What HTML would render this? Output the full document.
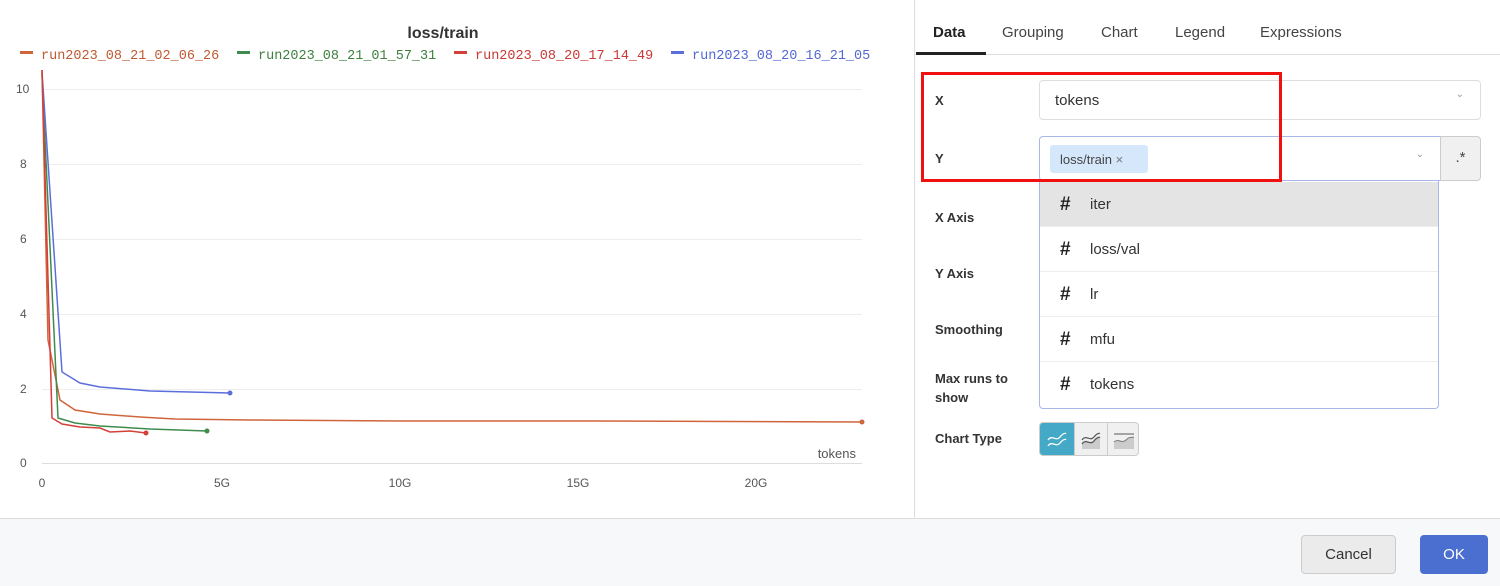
<!DOCTYPE html>
<html><head><style>
*{box-sizing:border-box;margin:0;padding:0}
body{width:1500px;height:586px;overflow:hidden;background:#fff;font-family:"Liberation Sans",sans-serif;position:relative;color:#333}
.abs{position:absolute}
.lbl{position:absolute;font-size:13px;font-weight:bold;color:#333}
.item{position:absolute;left:1040px;width:398px;height:45px;border-bottom:1px solid #eee;font-size:15px;color:#333;line-height:45px}
.item b{position:absolute;left:20px;font-size:19px;color:#222}
.item span{position:absolute;left:50px}
</style></head><body>
<svg class="abs" style="left:0;top:0" width="914" height="518">
<text x="443" y="38" font-size="16" font-weight="bold" text-anchor="middle" fill="#333" font-family="Liberation Sans">loss/train</text>
<g font-family="Liberation Mono" font-size="13.5">
<rect x="20" y="51" width="13" height="3" fill="#d0643a"/><text x="41" y="59" fill="#c05a32">run2023_08_21_02_06_26</text>
<rect x="237" y="51" width="13" height="3" fill="#3d8c4d"/><text x="258" y="59" fill="#3d8040">run2023_08_21_01_57_31</text>
<rect x="454" y="51" width="13" height="3" fill="#d43f3a"/><text x="475" y="59" fill="#c83a35">run2023_08_20_17_14_49</text>
<rect x="671" y="51" width="13" height="3" fill="#5b6fdc"/><text x="692" y="59" fill="#5468d4">run2023_08_20_16_21_05</text>
</g>
<g stroke="#eee" stroke-width="1">
<line x1="42" y1="89.5" x2="862" y2="89.5"/><line x1="42" y1="164.5" x2="862" y2="164.5"/><line x1="42" y1="239.5" x2="862" y2="239.5"/><line x1="42" y1="314.5" x2="862" y2="314.5"/><line x1="42" y1="389.5" x2="862" y2="389.5"/>
</g>
<line x1="42" y1="463.5" x2="862" y2="463.5" stroke="#ddd"/>
<g font-size="12" fill="#555" font-family="Liberation Sans">
<text x="16" y="93">10</text><text x="20" y="168">8</text><text x="20" y="243">6</text><text x="20" y="318">4</text><text x="20" y="393">2</text><text x="20" y="467">0</text>
<text x="42" y="487" text-anchor="middle">0</text><text x="222" y="487" text-anchor="middle">5G</text><text x="400" y="487" text-anchor="middle">10G</text><text x="578" y="487" text-anchor="middle">15G</text><text x="756" y="487" text-anchor="middle">20G</text>
<text x="856" y="458" text-anchor="end" font-size="13">tokens</text>
</g>
<g fill="none" stroke-width="1.5">
<polyline stroke="#d0643a" points="42,70 48,340 60,400 75,410 100,414 140,417 175,419 250,420 400,421 600,421 862,422"/>
<polyline stroke="#3d8c4d" points="42,75 58,418 75,423 100,426 150,429 207,431"/>
<polyline stroke="#5b6fdc" points="42,72 62,372 80,383 100,387 150,391 230,393"/>
<polyline stroke="#d43f3a" points="42,70 52,418 62,424 80,427 100,428 110,432 130,431 146,433"/>
</g>
<circle cx="862" cy="422" r="2.5" fill="#d0643a"/><circle cx="207" cy="431" r="2.5" fill="#3d8c4d"/><circle cx="230" cy="393" r="2.5" fill="#5b6fdc"/><circle cx="146" cy="433" r="2.5" fill="#d43f3a"/>
</svg>
<div class="abs" style="left:914px;top:0;width:1px;height:518px;background:#ddd"></div>
<div class="abs" style="left:915px;top:54px;width:585px;height:1px;background:#ddd"></div>
<div class="abs" style="left:916px;top:52px;width:70px;height:3px;background:#222"></div>
<div class="abs" style="top:24px;left:933px;font-size:15px;font-weight:bold;color:#222">Data</div>
<div class="abs" style="top:24px;left:1002px;font-size:15px;color:#444">Grouping</div>
<div class="abs" style="top:24px;left:1101px;font-size:15px;color:#444">Chart</div>
<div class="abs" style="top:24px;left:1175px;font-size:15px;color:#444">Legend</div>
<div class="abs" style="top:24px;left:1260px;font-size:15px;color:#444">Expressions</div>
<div class="lbl" style="left:935px;top:93px">X</div>
<div class="lbl" style="left:935px;top:151px">Y</div>
<div class="lbl" style="left:935px;top:210px">X Axis</div>
<div class="lbl" style="left:935px;top:266px">Y Axis</div>
<div class="lbl" style="left:935px;top:322px">Smoothing</div>
<div class="lbl" style="left:935px;top:369px;line-height:19px">Max runs to<br>show</div>
<div class="lbl" style="left:935px;top:431px">Chart Type</div>
<div class="abs" style="left:1039px;top:80px;width:442px;height:40px;border:1px solid #ddd;border-radius:4px;font-size:15px;padding:11px 15px;color:#333">tokens<span style="position:absolute;right:16px;top:8px;font-size:10px;color:#999">&#8964;</span></div>
<div class="abs" style="left:1039px;top:136px;width:402px;height:45px;border:1px solid #a9b6e8;border-radius:4px 0 0 4px"><div class="abs" style="left:10px;top:8px;width:98px;height:28px;background:#d5e8fb;border-radius:3px;font-size:13px;color:#444;padding:7px 10px">loss/train <span style="color:#777">&#215;</span></div><span style="position:absolute;right:16px;top:12px;font-size:10px;color:#999">&#8964;</span></div>
<div class="abs" style="left:1440px;top:136px;width:41px;height:45px;border:1px solid #ccc;background:#f0f0f0;border-radius:0 4px 4px 0;font-size:15px;text-align:center;line-height:42px;color:#444">.*</div>
<div class="abs" style="left:1039px;top:181px;width:400px;height:228px;border:1px solid #a9b6e8;border-top:none;border-radius:0 0 4px 4px"></div>
<div class="item" style="top:182px;background:#e4e4e4"><b>#</b><span>iter</span></div>
<div class="item" style="top:227px"><b>#</b><span>loss/val</span></div>
<div class="item" style="top:272px"><b>#</b><span>lr</span></div>
<div class="item" style="top:317px"><b>#</b><span>mfu</span></div>
<div class="item" style="top:362px;border-bottom:none"><b>#</b><span>tokens</span></div>
<div class="abs" style="left:921px;top:72px;width:361px;height:110px;border:3px solid #f01010"></div>
<div class="abs" style="left:1039px;top:422px;width:100px;height:34px;border:1px solid #ccc;border-radius:4px;background:#f0f0f0;overflow:hidden">
<div class="abs" style="left:0;top:0;width:34px;height:34px;background:#44a9c6"><svg width="34" height="34"><path d="M8 17c4-6 8 2 12-3s5-3 6-4M8 23c4-6 8 2 12-3s5-3 6-4" stroke="#fff" fill="none" stroke-width="1.3"/></svg></div>
<div class="abs" style="left:34px;top:0;width:33px;height:34px;border-left:1px solid #ccc"><svg width="33" height="34"><path d="M7 24V20c4-6 8 2 12-3s5-3 6-4V26H7z" fill="#ccc"/><path d="M7 17c4-6 8 2 12-3s5-3 6-4M7 21c4-6 8 2 12-3s5-3 6-4" stroke="#555" fill="none" stroke-width="1.2"/></svg></div>
<div class="abs" style="left:67px;top:0;width:33px;height:34px;border-left:1px solid #ccc"><svg width="33" height="34"><path d="M6 11h20" stroke="#777" stroke-width="1.3"/><path d="M6 26V19c4-4 8 2 12-2s5-2 8-3V26z" fill="#ccc"/><path d="M6 19c4-4 8 2 12-2s5-2 8-3" stroke="#777" fill="none"/></svg></div>
</div>
<div class="abs" style="left:0;top:518px;width:1500px;height:68px;background:#f7f8fa;border-top:1px solid #ddd"></div>
<div class="abs" style="left:1301px;top:535px;width:95px;height:39px;border:1px solid #ccc;border-radius:4px;background:#ebebeb;font-size:15px;text-align:center;line-height:37px;color:#333">Cancel</div>
<div class="abs" style="left:1420px;top:535px;width:68px;height:39px;border-radius:4px;background:#4b6fd0;font-size:15px;text-align:center;line-height:39px;color:#fff">OK</div>
</body></html>
